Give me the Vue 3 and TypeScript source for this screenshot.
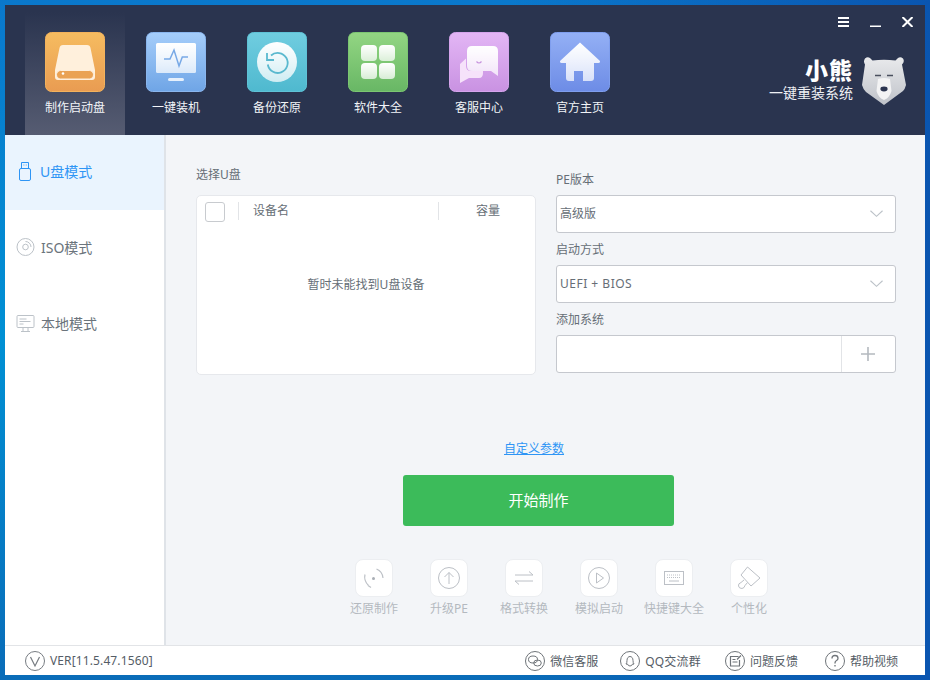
<template>
  <div class="desktop">
    <div class="window">
      <header class="header">
        <nav class="nav">
          <div v-for="item in navItems" :key="item.key" class="nav-item" :class="{ active: item.key === 'boot' }">
            <svg class="nav-icon" viewBox="0 0 60 60" width="60" height="60">
              <defs>
                <linearGradient id="glyph" x1="0" y1="0" x2="0" y2="1">
                  <stop offset="0" stop-color="#ffffff" />
                  <stop offset="1" stop-color="#ffffff" stop-opacity="0.72" />
                </linearGradient>
                <linearGradient :id="`bg-${item.key}`" x1="0" y1="0" x2="0" y2="1">
                  <stop offset="0" :stop-color="item.from" />
                  <stop offset="1" :stop-color="item.to" />
                </linearGradient>
              </defs>
              <rect x="0.5" y="0.5" width="59" height="59" rx="6" :fill="`url(#bg-${item.key})`" :stroke="item.edge" />
              <template v-if="item.key === 'boot'">
                <path d="M18 13h24q3 0 3.500 3L50 38v7q0 3-3 3H13q-3 0-3-3v-7l4.500-22q.5-3 3.500-3z" fill="#fff3e4" opacity="0.95" />
                <rect x="11.500" y="38.500" width="37" height="8.500" rx="4.200" fill="#eaa254" stroke="#ffeeda" />
                <circle cx="18" cy="41.500" r="1.300" fill="#fff" />
              </template>
              <template v-else-if="item.key === 'install'">
                <rect x="10" y="11" width="40" height="30" rx="1.500" fill="url(#glyph)" />
                <rect x="22" y="46" width="16" height="3" rx="1.500" fill="#e6f0fc" />
                <path d="M18 27h6l4-9 5 16 3.300-9H42" fill="none" stroke="#78a9e6" stroke-width="1.500" />
              </template>
              <template v-else-if="item.key === 'backup'">
                <circle cx="30" cy="30" r="20" fill="url(#glyph)" />
                <path d="M24 23.500a10 10 0 1 1-3.200 9" fill="none" stroke="#5ab9cf" stroke-width="1.800" />
                <path d="M20 21v7h7" fill="none" stroke="#5ab9cf" stroke-width="1.800" />
              </template>
              <template v-else-if="item.key === 'soft'">
                <rect x="13" y="13" width="16" height="16" rx="4" fill="url(#glyph)" />
                <rect x="31" y="13" width="16" height="16" rx="4" fill="url(#glyph)" />
                <rect x="13" y="31" width="16" height="16" rx="4" fill="url(#glyph)" />
                <rect x="31" y="31" width="16" height="16" rx="4" fill="url(#glyph)" />
              </template>
              <template v-else-if="item.key === 'service'">
                <path d="M17 27v-.500L11 32v19l9-5h10q4 0 4-5v-2H22q-5 0-5-5z" fill="#f6e2fa" />
                <path d="M23 14h21q5 0 5 5v25l-7-5H23q-5 0-5-5V19q0-5 5-5z" fill="url(#glyph)" />
                <path d="M27.500 29.500q2.500 3 5 0" fill="none" stroke="#c793dd" stroke-width="1.200" />
              </template>
              <template v-else>
                <path d="M30 10.500L50 29q.5 2-1.500 2H44v15q0 3-3 3h-8V39h-9v10h-5q-3 0-3-3V31h-4.500q-2 0-1.500-2z" fill="url(#glyph)" />
              </template>
            </svg>
            <span class="nav-label">{{ item.label }}</span>
          </div>
        </nav>
        <div class="header-right">
          <div class="win-controls">
            <svg width="11" height="10" viewBox="0 0 11 10"><path d="M0 1h11M0 5h11M0 9h11" stroke="#fff" stroke-width="2" /></svg>
            <svg width="11" height="10" viewBox="0 0 11 10"><path d="M0 9.500h11" stroke="#fff" stroke-width="2" /></svg>
            <svg width="11" height="10" viewBox="0 0 11 10"><path d="M.5 0l10 10M10.500 0l-10 10" stroke="#fff" stroke-width="2" /></svg>
          </div>
          <div class="brand">
            <div class="brand-text">
              <div class="brand-name">小熊</div>
              <div class="brand-sub">一键重装系统</div>
            </div>
            <svg class="bear" width="44" height="48" viewBox="0 0 44 48">
              <defs>
                <linearGradient id="bearFace" x1="0" y1="0" x2="0" y2="1">
                  <stop offset="0" stop-color="#e9eaec" />
                  <stop offset="1" stop-color="#bfc2c9" />
                </linearGradient>
              </defs>
              <path d="M3 1.500q2.500-2 5-.5l2.500 2.500q11.500-1.500 23 0L36 1q2.500-1.500 5 .5 2 3-1 6L44 28q-1 4-3 6L22 48 4 35q-3-3-4-7L3 7.500Q1 4.500 3 1.500z" fill="url(#bearFace)" />
              <path d="M16 22q6-2 12 0l1.500 12q-2 7-7.500 9-5.500-2-7.500-9z" fill="#f3f3f4" />
              <path d="M13 18.500h6M25 18.500h6" stroke="#4a4f5e" stroke-width="1.400" />
              <ellipse cx="22" cy="32" rx="3.600" ry="2.400" fill="#2c3550" />
            </svg>
          </div>
        </div>
      </header>

      <div class="body">
        <aside class="sidebar">
          <div v-for="mode in modes" :key="mode.key" class="mode" :class="{ active: mode.key === 'usb' }">
            <svg class="mode-icon" width="20" height="20" viewBox="0 0 20 20" fill="none">
              <template v-if="mode.key === 'usb'">
                <rect x="3.500" y="7.500" width="11" height="12" rx="1.500" stroke="#2e95f5" />
                <path d="M5.500 7.500v-6h7v6M7.500 4h.800M9.800 4h.800" stroke="#2e95f5" />
              </template>
              <template v-else-if="mode.key === 'iso'">
                <circle cx="9.500" cy="10" r="8.500" stroke="#bcc2c8" />
                <circle cx="9.500" cy="10" r="2.800" stroke="#bcc2c8" />
                <path d="M9.500 4.500a5.500 5.500 0 0 1 5.500 5.500" stroke="#bcc2c8" />
              </template>
              <template v-else>
                <rect x="1" y="2.500" width="17" height="12" rx="1" stroke="#bcc2c8" />
                <path d="M3.500 6h7M3.500 8.500h11M3.500 11h4M7 15v3M12 15v3M5 18.500h9" stroke="#bcc2c8" />
              </template>
            </svg>
            <span>{{ mode.label }}</span>
          </div>
        </aside>

        <main class="main">
          <section class="form-row">
            <div class="device-col">
              <div class="section-label">选择U盘</div>
              <div class="device-table">
                <div class="device-head">
                  <span class="checkbox"></span>
                  <span class="head-name">设备名</span>
                  <span class="head-size">容量</span>
                </div>
                <div class="device-empty">暂时未能找到U盘设备</div>
              </div>
            </div>
            <div class="option-col">
              <div class="option-label">PE版本</div>
              <div class="field">
                <span class="field-value">高级版</span>
                <svg class="chevron" width="13" height="8" viewBox="0 0 14 8"><path d="M.5.500L7 6.500 13.500.500" fill="none" stroke="#bcc2c8" stroke-width="1.200" /></svg>
              </div>
              <div class="option-label">启动方式</div>
              <div class="field">
                <span class="field-value latin">UEFI + BIOS</span>
                <svg class="chevron" width="13" height="8" viewBox="0 0 14 8"><path d="M.5.500L7 6.500 13.500.500" fill="none" stroke="#bcc2c8" stroke-width="1.200" /></svg>
              </div>
              <div class="option-label">添加系统</div>
              <div class="field add-field">
                <span class="add-input"></span>
                <span class="add-btn">
                  <svg width="14" height="14" viewBox="0 0 14 14"><path d="M7 0v14M0 7h14" stroke="#b4b9bf" stroke-width="1.600" /></svg>
                </span>
              </div>
            </div>
          </section>

          <a class="custom-link">自定义参数</a>
          <button class="start-btn" type="button">开始制作</button>

          <section class="tools">
            <div v-for="tool in tools" :key="tool.key" class="tool">
              <span class="tool-tile">
                <svg width="24" height="24" viewBox="0 0 24 24" fill="none" stroke="#bcc0c6" stroke-width="1">
                  <template v-if="tool.key === 'restore'">
                    <circle cx="11.500" cy="12.500" r="1.500" fill="#a9aeb5" stroke="none" />
                    <path d="M14.500 3q6 2.500 6.500 9M3 8.500q-1.500 6 3.500 11M6 19.500l3 2" stroke-width="1.200" />
                  </template>
                  <template v-else-if="tool.key === 'upgrade'">
                    <circle cx="12" cy="12" r="10.500" />
                    <path d="M12 18V6.500M7.500 11L12 6.500l4.500 4.500" />
                  </template>
                  <template v-else-if="tool.key === 'convert'">
                    <path d="M3 9h18l-4-3.500M21 15H3l4 3.500" />
                  </template>
                  <template v-else-if="tool.key === 'sim'">
                    <circle cx="12" cy="12" r="10.500" />
                    <path d="M9.500 7l7 5-7 5z" />
                  </template>
                  <template v-else-if="tool.key === 'keys'">
                    <rect x="2.500" y="5.500" width="19" height="13" />
                    <path d="M5 9h14M5 11.500h14" stroke-dasharray="1 1" />
                    <path d="M7 15h10" />
                  </template>
                  <template v-else>
                    <path d="M10.500 1L23 12l-9 8L4 9zM7 14l-3 2.500q-3 1-2.500 3.500t3.500 2.500q2.500-.5 3-3l2.500-3" />
                  </template>
                </svg>
              </span>
              <span class="tool-label">{{ tool.label }}</span>
            </div>
          </section>
        </main>
      </div>

      <footer class="footer">
        <div class="version">
          <svg width="20" height="20" viewBox="0 0 20 20" fill="none" stroke="#777c82"><circle cx="10" cy="10" r="9.500" /><path d="M5.500 6l4.500 9 4.500-9" stroke-width="1.200" /></svg>
          <span class="version-text">VER[11.5.47.1560]</span>
        </div>
        <div class="links">
          <div v-for="link in links" :key="link.key" class="link" :class="link.key">
            <svg width="20" height="20" viewBox="0 0 20 20" fill="none" stroke="#6f7479">
              <circle cx="10" cy="10" r="9.500" />
              <template v-if="link.key === 'wechat'">
                <ellipse cx="8" cy="8.500" rx="4.500" ry="3.500" />
                <ellipse cx="12.500" cy="12" rx="3.800" ry="3" />
              </template>
              <template v-else-if="link.key === 'qq'">
                <path d="M6 13q1-1 1-3.500C7 7 8.300 5.500 10 5.500s3 1.500 3 4q0 2.500 1 3.500-1 .5-1.500 0-.5 2-2.500 2t-2.500-2q-.5.500-1.500 0z" />
              </template>
              <template v-else-if="link.key === 'feedback'">
                <path d="M13.500 5.500h-8v9.500h9v-6M7.500 8.500h3M7.500 11h5M12 8.500l4-4" stroke-width="1.200" />
              </template>
              <template v-else>
                <path d="M7 7.500q0-3 3-3t3 2.700q0 1.500-1.500 2.300t-1.500 2.500v.500M10 14v1.500" stroke-width="1.300" />
              </template>
            </svg>
            <span>{{ link.label }}</span>
          </div>
        </div>
      </footer>
    </div>
  </div>
</template>

<script setup lang="ts">
const navItems = [
  { key: 'boot', label: '制作启动盘', from: '#f6bc60', to: '#e99c52', edge: '#f3b25c' },
  { key: 'install', label: '一键装机', from: '#a5cdfa', to: '#6fa5e6', edge: '#8ab6ee' },
  { key: 'backup', label: '备份还原', from: '#70cde0', to: '#4fb9cf', edge: '#5fc2d6' },
  { key: 'soft', label: '软件大全', from: '#93d683', to: '#68b765', edge: '#7cc672' },
  { key: 'service', label: '客服中心', from: '#e3b6f5', to: '#c992e2', edge: '#d5a4ec' },
  { key: 'home', label: '官方主页', from: '#94b0f5', to: '#6d8ce6', edge: '#7f9eee' },
]

const modes = [
  { key: 'usb', label: 'U盘模式' },
  { key: 'iso', label: 'ISO模式' },
  { key: 'local', label: '本地模式' },
]

const tools = [
  { key: 'restore', label: '还原制作' },
  { key: 'upgrade', label: '升级PE' },
  { key: 'convert', label: '格式转换' },
  { key: 'sim', label: '模拟启动' },
  { key: 'keys', label: '快捷键大全' },
  { key: 'theme', label: '个性化' },
]

const links = [
  { key: 'wechat', label: '微信客服' },
  { key: 'qq', label: 'QQ交流群' },
  { key: 'feedback', label: '问题反馈' },
  { key: 'help', label: '帮助视频' },
]
</script>

<style>
html,
body {
  margin: 0;
  padding: 0;
}
</style>

<style scoped>
.desktop {
  width: 930px;
  height: 680px;
  padding: 5px;
  box-sizing: border-box;
  background:
    linear-gradient(90deg, rgba(10, 80, 176, 0) 55%, #0a55b0 100%),
    linear-gradient(180deg, #0a78cc 0%, #0090d4 50%, #0a6cb8 100%);
  font-family: "Noto Sans", "Noto Sans CJK SC", sans-serif;
  font-size: 12px;
  color: #666e76;
}

.window {
  width: 920px;
  height: 670px;
  display: flex;
  flex-direction: column;
  background: #fff;
}

.header {
  height: 130px;
  flex: none;
  display: flex;
  justify-content: space-between;
  background: #2a344f;
}

.nav {
  display: flex;
  gap: 1px;
  padding: 7px 0 0 20px;
}

.nav-item {
  width: 100px;
  display: flex;
  flex-direction: column;
  align-items: center;
  padding-top: 20px;
  box-sizing: border-box;
}

.nav-item.active {
  background: linear-gradient(180deg, #2a344f 0%, #565c72 100%);
}

.nav-icon {
  display: block;
}

.nav-label {
  margin-top: 7px;
  line-height: 18px;
  color: #f2f4f8;
}

.header-right {
  display: flex;
  flex-direction: column;
  align-items: flex-end;
}

.win-controls {
  display: flex;
  gap: 21px;
  padding: 12px 12px 0 0;
}

.win-controls svg {
  display: block;
}

.brand {
  display: flex;
  gap: 9px;
  margin-top: 30px;
  padding-right: 19px;
}

.brand-text {
  text-align: right;
  color: #fff;
}

.brand-name {
  font-size: 23px;
  font-weight: 900;
  line-height: 26px;
  margin-bottom: 1px;
  letter-spacing: 1px;
}

.brand-sub {
  font-size: 14px;
  line-height: 18px;
  color: #eef0f4;
}

.body {
  flex: 1;
  min-height: 0;
  display: flex;
}

.sidebar {
  width: 161px;
  flex: none;
  box-sizing: border-box;
  border-right: 2px solid #dfe3e8;
  background: #fff;
}

.mode {
  height: 76px;
  box-sizing: border-box;
  padding: 0 0 5px 11px;
  display: flex;
  align-items: center;
  gap: 5px;
  font-size: 14px;
  color: #6b747c;
}

.mode:first-child {
  height: 75px;
  padding-bottom: 3px;
  margin-bottom: 1px;
}

.mode.active {
  background: #eaf4fe;
  color: #2e95f5;
  gap: 4px;
}

.mode-icon {
  flex: none;
}

.main {
  flex: 1;
  min-width: 0;
  background: #f3f5f8;
  display: flex;
  flex-direction: column;
  align-items: flex-start;
}

.form-row {
  align-self: stretch;
  display: flex;
  gap: 20px;
  padding: 30px 0 0 30px;
}

.device-col,
.option-col {
  width: 340px;
  flex: none;
}

.section-label {
  line-height: 18px;
  padding-top: 1px;
  margin-bottom: 11px;
}

.device-table {
  height: 180px;
  box-sizing: border-box;
  border: 1px solid #e6e8ec;
  border-radius: 5px;
  background: #fff;
}

.device-head {
  height: 30px;
  display: flex;
  align-items: center;
  padding-left: 8px;
}

.checkbox {
  width: 20px;
  height: 20px;
  flex: none;
  box-sizing: border-box;
  border: 1px solid #c8cbcf;
  border-radius: 3px;
  margin-top: 1px;
  background: #fff;
}

.head-name {
  flex: none;
  width: 200px;
  margin-left: 13px;
  padding-left: 14px;
  box-sizing: border-box;
  border-left: 1px solid #e2e4e7;
  line-height: 18px;
}

.head-size {
  flex: 1;
  padding-left: 2px;
  text-align: center;
  border-left: 1px solid #e2e4e7;
  line-height: 18px;
}

.device-empty {
  text-align: center;
  line-height: 18px;
  margin-top: 50px;
}

.option-label {
  line-height: 18px;
  height: 18px;
  margin: 8px 0 6px;
}

.option-label:first-child {
  margin-top: 6px;
}

.field {
  height: 38px;
  box-sizing: border-box;
  border: 1px solid #c5c8ce;
  border-radius: 3px;
  background: #fff;
  display: flex;
  align-items: center;
  justify-content: space-between;
  padding: 0 12px 0 3px;
}

.field-value {
  color: #666e76;
  padding-bottom: 2px;
}

.field-value.latin {
  letter-spacing: 0.5px;
}

.chevron {
  display: block;
}

.add-field {
  padding: 0;
}

.add-input {
  flex: 1;
}

.add-btn {
  width: 54px;
  height: 100%;
  box-sizing: border-box;
  padding-right: 2px;
  border-left: 1px solid #e2e4e7;
  display: flex;
  align-items: center;
  justify-content: center;
}

.custom-link {
  margin: 65px 0 0 338px;
  line-height: 18px;
  color: #2e95f5;
  text-decoration: underline;
}

.start-btn {
  width: 271px;
  height: 51px;
  margin: 17px 0 0 237px;
  padding: 0 0 3px;
  border: none;
  border-radius: 3px;
  background: #3cbb5a;
  color: #fff;
  font-family: inherit;
  font-size: 15px;
}

.tools {
  display: flex;
  margin: 33px 0 0 170.5px;
}

.tool {
  width: 75px;
  display: flex;
  flex-direction: column;
  align-items: center;
}

.tool-tile {
  width: 38px;
  height: 38px;
  border-radius: 8px;
  background: #fff;
  border: 1px solid #eceef1;
  box-sizing: border-box;
  display: flex;
  align-items: center;
  justify-content: center;
}

.tool-label {
  margin-top: 3px;
  line-height: 18px;
  color: #b4b9bf;
  white-space: nowrap;
}

.footer {
  height: 30px;
  flex: none;
  box-sizing: border-box;
  border-top: 1px solid #e2e4e7;
  background: #fff;
  display: flex;
  align-items: center;
  justify-content: space-between;
  padding: 0 27px 0 20px;
  color: #555d66;
}

.version,
.link {
  display: flex;
  align-items: center;
  gap: 5px;
}

.version-text {
  letter-spacing: 0.12px;
}

.links {
  display: flex;
}

.link.qq {
  margin-left: 22px;
  letter-spacing: 0.2px;
}

.link.feedback {
  margin-left: 24px;
}

.link.help {
  margin-left: 27px;
}
</style>
